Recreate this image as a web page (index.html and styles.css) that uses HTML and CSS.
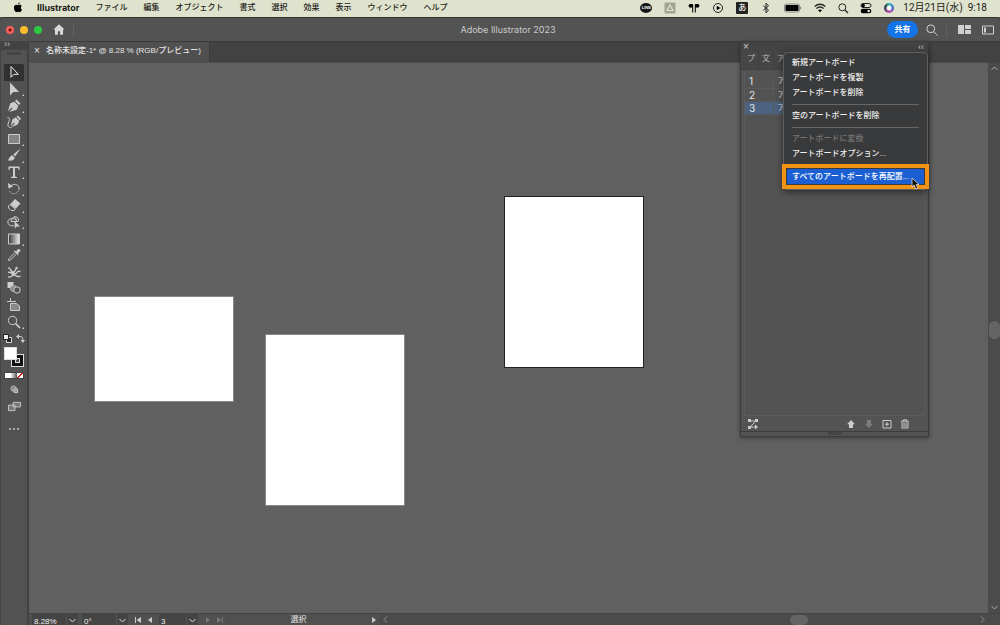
FILE: index.html
```html
<!DOCTYPE html>
<html lang="ja">
<head>
<meta charset="utf-8">
<title>Adobe Illustrator 2023</title>
<link rel="stylesheet" href="styles.css">
</head>
<body>
<header class="menubar">
  <svg class="apple" viewBox="0 0 12 14"><path d="M8.2 0.6C7 .9 6 2 6.1 3.2 7.4 3.2 8.300 1.900 8.200.6zM6.200 4C5.600 4 5 3.500 4 3.500 2.200 3.500.8 5 .8 7.400.8 10 2.500 13 4 13c.8 0 1.200-.5 2.200-.5s1.300.5 2.100.5c1.200 0 2.400-2 2.800-3.300C9.300 8.900 9 6.200 10.800 5.100 10.200 4.100 9.200 3.500 8.300 3.500 7.400 3.500 6.800 4 6.200 4z"/></svg>
  <nav class="menus">
    <button class="app">Illustrator</button><button>ファイル</button><button>編集</button><button>オブジェクト</button><button>書式</button><button>選択</button><button>効果</button><button>表示</button><button>ウィンドウ</button><button>ヘルプ</button>
  </nav>
  <div class="tray">
    <span class="line-app"><b>LINE</b></span>
    <svg class="ico" viewBox="0 0 12 12"><rect x=".5" y=".5" width="11" height="11" rx="1" fill="#a2a594"/><path d="M6 3 9 8.500H3z" fill="none" stroke="#dfe2cd" stroke-width="1.200"/></svg>
    <svg class="ico" viewBox="0 0 12 12"><path d="M1.800 2h2.400q1 0 1 1v7.500H4.200V5.500H3A1.700 1.700 0 0 1 1.800 2zM10.200 2H7.800q-1 0-1 1v7.500h1V5.500H9A1.700 1.700 0 0 0 10.200 2z"/></svg>
    <svg class="ico" viewBox="0 0 12 12"><circle cx="6" cy="6" r="4.500" fill="none" stroke="#222"/><path d="M4.700 3.700 8.500 6 4.700 8.300z"/></svg>
    <span class="ime">あ</span>
    <svg class="ico" viewBox="0 0 12 12"><path d="M3.300 3.700 8.500 8.200 6 10.800V1.200L8.500 3.800 3.300 8.300" fill="none" stroke="#222"/></svg>
    <svg class="battery" viewBox="0 0 18 10"><rect x=".5" y="1" width="15" height="8" rx="2" fill="none" stroke="#888"/><rect x="1.500" y="2" width="13" height="6" rx="1"/><path d="M16.500 3.500q1.500 1.500 0 3z"/></svg>
    <div class="tray-end">
      <svg class="ico" viewBox="0 0 12 12"><path d="M.7 4.500Q6 0 11.300 4.500M2.400 6.500Q6 3.400 9.600 6.500" fill="none" stroke="#222" stroke-width="1.300"/><path d="M4 8.200q2-1.500 4 0L6 10.300z"/></svg>
      <svg class="ico" viewBox="0 0 12 12"><circle cx="5.300" cy="5.300" r="3.500" fill="none" stroke="#222"/><path d="m8 8 3 3" stroke="#222" stroke-width="1.200"/></svg>
      <svg class="ico" viewBox="0 0 12 12"><rect x="1" y="1.500" width="10" height="4" rx="2" fill="none" stroke="#222"/><circle cx="3.200" cy="3.500" r="1.700"/><rect x=".7" y="6.800" width="10.600" height="4.400" rx="2.200"/><circle cx="8.700" cy="9" r="1.300" fill="#dfe2cd"/></svg>
      <span class="siri"></span>
    </div>
    <time>12月21日(水)&nbsp; 9:18</time>
  </div>
</header>

<div class="titlebar">
  <div class="title-start">
    <div class="lights"><i class="red"></i><i class="yellow"></i><i class="green"></i></div>
    <button class="home" aria-label="ホーム"><svg viewBox="0 0 14 12"><path d="M7 0 .5 6H2.300v6h3.400V8h2.600v4h3.400V6h1.800z"/></svg></button>
  </div>
  <h1>Adobe Illustrator 2023</h1>
  <div class="title-tools">
    <button class="share">共有</button>
    <button aria-label="検索"><svg class="find" viewBox="0 0 12 12"><circle cx="4.800" cy="4.800" r="3.900"/><path d="m7.800 7.800 3.700 3.700"/></svg></button>
    <button class="divided" aria-label="ドキュメントの配置"><svg class="arrange" viewBox="0 0 13 9"><path d="M0 0h6v9H0zM7 0h6v4H7zM7 5h6v4H7z"/></svg></button>
    <button aria-label="ワークスペース"><svg class="space" viewBox="0 0 12 10"><path d="M.5 1h11v8H.5z" fill="none" stroke="#d0d0d0"/><path d="M2 2.500h2v5H2z" fill="#d0d0d0"/></svg></button>
  </div>
</div>

<div class="workspace">
  <aside class="toolbox">
    <div class="toolbox-head">››</div>
    <div class="grip"></div>
    <div class="tools">
      <button class="active" aria-label="選択"><svg viewBox="0 0 14 14"><path d="M4 1.500v10.800l3-3h4.300z" fill="none" stroke="#eee"/></svg></button>
      <button class="more" aria-label="ダイレクト選択"><svg viewBox="0 0 14 14"><path class="f" d="M3 .5v13l3.300-3.500h5.700z"/></svg></button>
      <button class="more" aria-label="ペン"><svg viewBox="0 0 14 14"><path class="f" d="m9.500.5 4 4L12 6 8 2zM7.300 2.700l4 4-1.600 4L2.200 13l3.500-3.700-.9-.9L1 12l2.300-7.700z"/></svg></button>
      <button aria-label="曲線"><svg viewBox="0 0 14 14"><path class="f" d="m11 .5 3 3.500-1.300 1.200-3.200-3.700zM8.800 2.200l3.400 3.800-1.500 3.500-6.200 2.700 3.300-3.900-.8-.7-3.300 3.800L5.300 4.500z"/><path class="s" d="M.5 2.500c3 0 2 3 .8 5.500C.3 11 1.500 13 4.500 12.500"/></svg></button>
      <button class="more" aria-label="長方形"><svg viewBox="0 0 14 14"><path d="M1.500 2.500h11v9h-11z" fill="#858585" stroke="#ccc"/></svg></button>
      <button class="more" aria-label="ブラシ"><svg viewBox="0 0 14 14"><path class="f" d="M13.500.5 6.200 6.500l2 2zM5.500 7.200l2.300 2.300C7 12.500 4 13.500.5 12.300c2-1 1.500-4 5-5.100z"/></svg></button>
      <button class="more" aria-label="文字"><svg viewBox="0 0 14 14"><path class="f" d="M1.500 1.500h11v3.500h-1l-.5-2H8v8.500l2 .5v1H4v-1l2-.5V3H3l-.5 2h-1z"/></svg></button>
      <button class="more" aria-label="回転"><svg viewBox="0 0 14 14"><path class="s" d="M3.500 4C8 .5 12.500 3 12 7"/><path class="f" d="m1 1 .5 5.500 4.500-2z"/><path class="s" stroke-dasharray="1 1" d="M12 7c-.5 5-7 6.500-9.500 2"/></svg></button>
      <button class="more" aria-label="消しゴム"><svg viewBox="0 0 14 14"><path class="f" d="m8 1 5.500 4.500-4.800 5.300-5.500-4.600z"/><path class="s" d="m3 6.500 5.300 4.500L7 12.500H4L1.500 10V8z"/></svg></button>
      <button class="more" aria-label="シェイプ形成"><svg viewBox="0 0 14 14"><path class="s" d="M7 10.500A4.500 3.700 0 1 1 9 5M4 6.500h7A3 3 0 0 0 6 3M4 7c0-3 3-5 3.500-5S10 5 10 7"/><path class="f" d="m7.500 6 .3 7.500 2-2h3.200z"/></svg></button>
      <button class="more" aria-label="グラデーション"><svg viewBox="0 0 14 14"><defs><linearGradient id="g"><stop stop-color="#383838"/><stop offset="1" stop-color="#eee"/></linearGradient></defs><path d="M1.500 2h11v10h-11z" fill="url(#g)" stroke="#ccc"/></svg></button>
      <button aria-label="スポイト"><svg viewBox="0 0 14 14"><path class="f" d="M9 3.500 11 1q2.500-.5 2.500 2L11 5.200l.8 1-1 1L6.800 3.600l1-1z"/><path class="s" d="M7.500 5 2.300 10.300 1.500 12.500l2.200-.8L9 6.500"/></svg></button>
      <button aria-label="パペットワープ"><svg viewBox="0 0 14 14"><path class="s" stroke-width="1.400" d="M1 3c2-1 2.500 2 4 4s3-1 4-3M1 7.500c2-1 3 0 4 1s4 1 5-1 2-1 3.500-1M1 12c3 1 4-2 6-2s4 3 6.500 1"/><circle class="f" cx="6" cy="8" r="2"/><circle class="f" cx="9.500" cy="3" r="1.200"/></svg></button>
      <button aria-label="ブレンド"><svg viewBox="0 0 14 14"><path class="f" d="M.5 1h6v6h-6z"/><circle cx="6.500" cy="7.500" r="3" fill="#888" stroke="#bbb"/><circle cx="10" cy="9" r="3.200" fill="#525252" stroke="#ccc"/></svg></button>
      <button aria-label="アートボード"><svg viewBox="0 0 14 14"><path class="s" d="M3.500 0v4M0 3.500h9"/><path d="M3.500 5.500h6l3 2.500v4.500h-9z" fill="#888" stroke="#ccc"/></svg></button>
      <button class="more" aria-label="ズーム"><svg viewBox="0 0 14 14"><circle class="s" cx="5.500" cy="5.500" r="4.200"/><path d="m8.700 8.700 4.300 4.300" stroke="#ccc" stroke-width="1.700"/></svg></button>
    </div>
    <div class="color-actions">
      <svg viewBox="0 0 9 9"><path d="M3.500 3.500h5v5h-5z" stroke="#ddd" fill="#222"/><path d="M.5.5h5v5h-5z" stroke="#222" fill="#eee"/></svg>
      <svg viewBox="0 0 9 9"><path class="s" d="M2 2.500h3Q7 2.500 7 7"/><path class="f" d="M0 2.500 3 0v5zM4.500 6h4.500L7 9z"/></svg>
    </div>
    <div class="swatches"><i class="stroke"></i><i class="fill"></i></div>
    <div class="modes"><i></i><i class="grad"></i><i class="none"></i></div>
    <svg class="draw-mode" viewBox="0 0 10 10"><circle cx="4" cy="4" r="3" fill="#888" stroke="#bbb"/><path d="M4.500 4.500h4v4h-4z" fill="#999" stroke="#ccc"/></svg>
    <svg class="screen-mode" viewBox="0 0 14 12"><path d="M5.500 1.500h8v5h-8zM.5 4.500h7v6h-7z" fill="#777" stroke="#ccc"/></svg>
    <div class="dots"><i></i><i></i><i></i></div>
  </aside>

  <main class="document">
    <div class="tabs"><div class="tab"><button aria-label="閉じる">×</button><span>名称未設定-1* @ 8.28 % (RGB/プレビュー)</span></div></div>
    <div class="view">
      <div class="canvas">
        <div class="artboard one"></div>
        <div class="artboard two"></div>
        <div class="artboard three"></div>
      </div>
      <div class="vscroll"><svg viewBox="0 0 7 5"><path d="M.5 4 3.500 1l3 3"/></svg><i></i><svg viewBox="0 0 7 5"><path d="m.5 1 3 3 3-3"/></svg></div>
    </div>
    <footer class="status">
      <div class="field zoom"><input aria-label="ズーム" value="8.28%"><button aria-label="ズームを選択"><svg viewBox="0 0 7 5"><path d="m.5 1 3 3 3-3"/></svg></button></div>
      <div class="field angle"><input aria-label="回転" value="0°"><button aria-label="角度を選択"><svg viewBox="0 0 7 5"><path d="m.5 1 3 3 3-3"/></svg></button></div>
      <div class="pager"><button aria-label="最初"><svg viewBox="0 0 6 6"><path d="M0 0h1v6H0zM6 0v6L1.500 3z"/></svg></button><button aria-label="前"><svg viewBox="0 0 6 6"><path d="M5 0v6L1 3z"/></svg></button></div>
      <div class="field page"><input aria-label="アートボード番号" value="3"><button aria-label="番号を選択"><svg viewBox="0 0 7 5"><path d="m.5 1 3 3 3-3"/></svg></button></div>
      <div class="pager off"><button disabled aria-label="次"><svg viewBox="0 0 6 6"><path d="M1 0v6l4-3z"/></svg></button><button disabled aria-label="最後"><svg viewBox="0 0 6 6"><path d="M0 0v6l4.500-3zM5 0h1v6H5z"/></svg></button></div>
      <div class="current">選択</div>
      <button class="play" aria-label="表示項目"><svg viewBox="0 0 6 6"><path d="M1 0v6l4-3z"/></svg></button>
      <div class="hscroll"><svg viewBox="0 0 5 7"><path d="m4 .5-3 3 3 3"/></svg><i></i><svg viewBox="0 0 5 7"><path d="m1 .5 3 3-3 3"/></svg></div>
    </footer>
  </main>
</div>

<section class="panel" aria-label="アートボード">
  <div class="panel-head"><button aria-label="閉じる">×</button><span>‹‹</span></div>
  <div class="panel-tabs"><button>プ</button><button>文</button><button>ア</button></div>
  <div class="list">
    <table>
      <tr><td>1</td><td>ア</td></tr>
      <tr><td>2</td><td>ア</td></tr>
      <tr class="selected"><td>3</td><td>ア</td></tr>
    </table>
  </div>
  <div class="panel-tools">
    <button aria-label="再配置"><svg viewBox="0 0 10 10"><path class="s" d="M8 2 2 8M2 8h5M2 2h5"/><path class="f" d="M0 0h3v3H0zM7 0h3v3H7zM0 7h3v3H0zM7 5.500 10 8l-3 2.500z"/></svg></button>
    <button class="up" aria-label="上へ"><svg viewBox="0 0 10 10"><path class="f" d="m5 1 4 4.200H7V9H3V5.200H1z"/></svg></button>
    <button class="down" disabled aria-label="下へ"><svg viewBox="0 0 10 10"><path class="f" d="m5 9 4-4.200H7V1H3v3.800H1z"/></svg></button>
    <button aria-label="新規"><svg viewBox="0 0 10 10"><path class="s" d="M1 1.500h8v7.500H1zM5 3.200v4M3 5.200h4"/></svg></button>
    <button aria-label="削除"><svg viewBox="0 0 10 10"><path class="s" d="M1 2.200h8M3.500 2V.8h3V2M2 3v6h6V3M4 3.500v4.500M6 3.500v4.500"/></svg></button>
  </div>
  <div class="panel-grip"><i></i></div>

  <div class="popup" role="menu">
    <button role="menuitem">新規アートボード</button>
    <button role="menuitem">アートボードを複製</button>
    <button role="menuitem">アートボードを削除</button>
    <hr>
    <button role="menuitem">空のアートボードを削除</button>
    <hr>
    <button role="menuitem" disabled>アートボードに変換</button>
    <button role="menuitem">アートボードオプション...</button>
    <hr>
    <button role="menuitem" class="chosen">すべてのアートボードを再配置...</button>
    <svg class="pointer" viewBox="0 0 9 13"><path d="M1 1v9l2.200-2 1.500 4 2-.8L5.200 7.500H8z" fill="#111" stroke="#ddd" stroke-width=".8"/></svg>
  </div>
</section>
</body>
</html>
```
FILE: styles.css
```css
* { box-sizing: border-box; }
body {
  margin: 0;
  height: 100vh;
  display: flex;
  flex-direction: column;
  position: relative;
  overflow: hidden;
  background: #535353;
  color: #e6e6e6;
  font: 8px/12px "Liberation Sans", "Noto Sans CJK JP", sans-serif;
}
button, input { font: inherit; color: inherit; background: none; border: 0; padding: 0; margin: 0; }
button { display: flex; align-items: center; justify-content: center; white-space: nowrap; }
svg { display: block; flex: none; }
.s { fill: none; stroke: #ccc; }
.f { fill: #ccc; }

/* macOS menu bar */
.menubar {
  flex: none;
  height: 17px;
  display: flex;
  align-items: center;
  padding: 0 13px 2px;
  background: #dfe2cd;
  color: #1c1c18;
  font-weight: 500;
}
.apple { width: 10px; height: 11px; margin-right: 14px; }
.menus { display: flex; gap: 16px; }
.menus .app { font-family: Inter, sans-serif; font-size: 9px; font-weight: 700; }
.tray { margin-left: auto; display: flex; align-items: center; gap: 12px; }
.ico { width: 12px; height: 12px; }
.line-app {
  width: 12px; height: 10px;
  border-radius: 50%;
  background: #151515;
  color: #fff;
  text-align: center;
  font-size: 4px;
  line-height: 10px;
}
.ime {
  width: 12px; height: 12px;
  border-radius: 1px;
  background: #222;
  color: #eee;
  text-align: center;
}
.battery { width: 18px; height: 10px; }
.tray-end { display: flex; align-items: center; gap: 11px; }
.siri {
  width: 10px; height: 10px;
  margin: 0 1px;
  border-radius: 50%;
  background: radial-gradient(circle, #fff 0 20%, transparent 50%), conic-gradient(#3bb, #46c 25%, #c4a 50%, #413a70 70%, #244 85%, #3bb);
}
.tray time { font-family: Roboto, "Noto Sans CJK JP", sans-serif; font-size: 10px; font-weight: 400; margin-left: -4px; white-space: nowrap; }

/* Application bar */
.titlebar {
  flex: none;
  height: 24px;
  display: grid;
  grid-template-columns: 1fr auto 1fr;
  align-items: center;
  padding: 0 6px;
  background: #535353;
  border-top: 1px solid #333;
  border-radius: 4px 4px 0 0;
}
.title-start { display: flex; align-items: center; gap: 8px; }
.lights { display: flex; gap: 6px; }
.lights i { width: 8px; height: 8px; border-radius: 50%; }
.red { background: radial-gradient(circle, #7a0c08 0 1px, #f4625a 2px); }
.yellow { background: #fbbc30; }
.green { background: #2dc840; }
.home { width: 24px; height: 14px; justify-content: flex-start; padding-left: 3px; border-right: 1px solid #616161; }
.home svg { width: 12px; height: 11px; fill: #d8d8d8; }
.titlebar h1 { margin: 0 0 0 16px; font-family: Inter, sans-serif; font-size: 9px; font-weight: 400; color: #ccc; }
.title-tools { display: flex; align-items: center; justify-content: flex-end; gap: 8px; }
.share { width: 31px; height: 17px; border-radius: 9px; background: #1473e6; color: #fff; font-weight: 700; }
.find { width: 12px; height: 12px; fill: none; stroke: #d0d0d0; }
.divided { border-left: 1px solid #616161; height: 14px; padding-left: 11px; }
.arrange { width: 13px; height: 9px; fill: #d0d0d0; }
.space { width: 12px; height: 10px; margin-left: 3px; }

.workspace { flex: 1; min-height: 0; display: flex; }

/* Tools */
.toolbox {
  flex: none;
  width: 29px;
  display: flex;
  flex-direction: column;
  align-items: center;
  background: #525252;
  border-left: 1px solid #444;
  border-right: 2px solid #424242;
}
.toolbox-head { width: 100%; height: 9px; background: #434343; padding-left: 3px; font-size: 9px; line-height: 7px; color: #ccc; }
.grip { width: 14px; height: 3px; margin-top: 2px; background: #454545; }
.tools { width: 20px; height: 266px; margin-top: 9px; display: grid; grid-template-rows: repeat(16, 1fr); }
.tools button { position: relative; }
.tools svg { width: 14px; height: 14px; }
.tools .active { background: #303030; border-radius: 1px; }
.more::after { content: ""; position: absolute; right: 0; bottom: 1px; border: 1px solid #ccc; border-top-color: transparent; border-left-color: transparent; }
.color-actions { width: 22px; height: 9px; margin-top: 4px; display: flex; justify-content: space-between; }
.color-actions svg { width: 9px; height: 9px; }
.swatches { width: 20px; height: 20px; margin-top: 4px; display: grid; grid-template-columns: 7px 6px 7px; grid-template-rows: 7px 6px 7px; }
.swatches .fill { grid-area: 1 / 1 / 3 / 3; background: #fff; border: 1px solid #ddd; }
.swatches .stroke { grid-area: 2 / 2 / 4 / 4; border: 1px solid #ddd; background: #525252; box-shadow: inset 0 0 0 3px #111, inset 0 0 0 4px #ddd; }
.modes { display: flex; margin-top: 5px; width: 20px; height: 7px; border: 1px solid #444; }
.modes i { flex: 1; background: #fff; }
.modes .grad { background: linear-gradient(90deg, #eee, #555); }
.modes .none { background: linear-gradient(135deg, #fff 40%, #d22 40% 60%, #fff 60%); }
.draw-mode { width: 9px; height: 9px; margin-top: 6px; }
.screen-mode { width: 13px; height: 11px; margin-top: 7px; }
.dots { display: flex; gap: 2px; margin-top: 16px; }
.dots i { width: 2px; height: 2px; background: #ccc; border-radius: 1px; }

/* Document window */
.document { flex: 1; min-width: 0; display: flex; flex-direction: column; }
.tabs { flex: none; height: 21px; display: flex; background: #424242; border-top: 1px solid #3b3b3b; }
.tab { display: flex; align-items: center; gap: 5px; padding: 0 8px 2px 4px; background: #505050; border-right: 1px solid #3b3b3b; font-weight: 500; white-space: nowrap; }
.tab button { font-size: 10px; width: 8px; }
.view { flex: 1; min-height: 0; display: flex; }
.canvas { flex: 1; position: relative; overflow: hidden; background: #606060; border-top: 1px solid #4c4c4c; }
.artboard { position: absolute; background: #fff; outline: 1px solid #888; }
.one { left: 66px; top: 234px; width: 138px; height: 104px; }
.two { left: 237px; top: 272px; width: 138px; height: 170px; }
.three { left: 476px; top: 134px; width: 138px; height: 170px; outline-color: #222; }
.vscroll { flex: none; width: 12px; padding: 3px 0; display: grid; grid-template-rows: 5px 250fr 18px 266fr 5px; justify-items: center; background: #4b4b4b; border-top: 1px solid #444; }
.vscroll i { grid-row: 3; width: 11px; border-radius: 6px; background: #646464; }
.vscroll svg:last-child { grid-row: 5; }
.vscroll svg, .field svg { width: 7px; height: 5px; fill: none; stroke: #aaa; }

/* Status bar */
.status { flex: none; height: 12px; display: flex; background: #505050; border-top: 1px solid #444; overflow: hidden; }
.field { height: 15px; display: flex; background: #444; margin-left: 3px; }
.field input { flex: 1; min-width: 0; padding-left: 2px; height: 15px; color: #eee; }
.field button { width: 12px; height: 13px; border-left: 1px solid #555; }
.field svg { stroke: #ddd; }
.zoom { width: 46px; }
.angle { width: 46px; margin-left: 4px; }
.page { width: 39px; margin-left: 2px; }
.pager { display: flex; gap: 6px; width: 22px; margin-left: 7px; }
.pager button, .play { height: 11px; }
.pager svg, .play svg { width: 6px; height: 6px; fill: #ccc; }
.off svg { fill: #777; }
.current { width: 140px; margin-left: 1px; text-align: center; border-left: 1px solid #484848; }
.play { width: 12px; }
.hscroll { flex: 1; display: grid; grid-template-columns: 5px 403fr 18px 172fr 5px 12px; align-items: center; padding: 0 3px; background: #4b4b4b; }
.hscroll i { grid-column: 3; height: 10px; border-radius: 5px; background: #646464; }
.hscroll svg { width: 5px; height: 7px; fill: none; stroke: #999; }
.hscroll svg:last-child { grid-column: 5; }

/* Artboards panel */
.panel {
  position: absolute;
  top: 41px;
  right: 71px;
  width: 189px;
  display: flex;
  flex-direction: column;
  background: #535353;
  border: 1px solid #3c3c3c;
  box-shadow: 0 1px 4px rgba(0, 0, 0, .4);
}
.panel-head { height: 9px; display: flex; justify-content: space-between; align-items: center; padding: 0 4px 0 2px; background: #434343; color: #ccc; font-size: 9px; }
.panel-head button { font-size: 10px; line-height: 8px; }
.panel-tabs { height: 19px; display: flex; background: #464646; color: #bbb; border-bottom: 1px solid #3f3f3f; }
.panel-tabs button { width: 14px; padding-bottom: 2px; border-right: 1px solid #3f3f3f; box-sizing: content-box; height: 16px; }
.panel-tabs button:first-child { padding-left: 3px; }
.list { height: 346px; margin: 0 3px; padding-top: 5px; border: 1px solid #5c5c5c; border-top: 0; }
.list table { width: 100%; border-collapse: collapse; table-layout: fixed; }
.list td { height: 13px; padding: 0 4px; line-height: 12px; border-bottom: 1px solid #595959; }
.list td:first-child { width: 28px; font-family: Inter, sans-serif; font-size: 10px; border-right: 1px solid #595959; }
.selected { background: #4b6280; }
.panel-tools { height: 15px; display: flex; align-items: center; gap: 8px; padding: 0 18px 0 7px; }
.panel-tools svg { width: 10px; height: 10px; }
.up { margin-left: auto; }
.down { opacity: .35; }
.panel-grip { height: 5px; display: flex; justify-content: center; border-top: 1px solid #3c3c3c; }
.panel-grip i { width: 14px; height: 3px; background: #444; }

/* Panel menu */
.popup {
  position: absolute;
  top: 10px;
  left: 42px;
  width: 145px;
  padding: 2px 3px 5px;
  background: #393a3b;
  border: 1px solid #5e5e5e;
  border-radius: 4px;
  box-shadow: 0 2px 7px rgba(0, 0, 0, .5);
}
.popup button { width: 100%; height: 15px; justify-content: flex-start; padding-left: 5px; color: #f0f0f0; font-weight: 500; }
.popup button:disabled { color: #777; }
.popup hr { height: 1px; margin: 4px 5px 3px; border: 0; background: #666; }
.popup .chosen { position: relative; background: #1c5fd2; border-radius: 2px; color: #fff; }
.chosen::after { content: ""; position: absolute; inset: -5px; border: 4px solid #f39314; }
.pointer { position: absolute; right: 7px; bottom: -1px; width: 9px; height: 13px; }
```
